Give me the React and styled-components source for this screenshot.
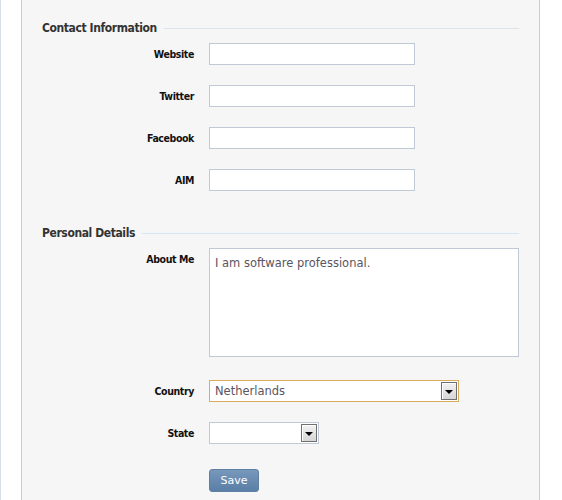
import styled, { createGlobalStyle } from 'styled-components';

const GlobalStyle = createGlobalStyle`
	html, body {
		margin: 0;
		padding: 0;
		background: #fff;
	}
	body {
		font-family: "DejaVu Sans", "Liberation Sans", sans-serif;
	}
`;

const Page = styled.div`
	display: flex;
	height: 500px;
	border-left: 1px solid #d5dee8;
	padding-left: 20px;
	overflow: hidden;
`;

const Panel = styled.div`
	width: 519px;
	box-sizing: border-box;
	background: #f6f6f6;
	border-left: 1px solid #cccccc;
	border-right: 1px solid #cccccc;
	padding: 19px 20px 0 20px;
`;

const Section = styled.section`
	margin-bottom: ${(p) => p.$gap || 0}px;
`;

const Legend = styled.div`
	display: flex;
	align-items: center;
	height: 18px;
	font-family: "DejaVu Sans Condensed", "DejaVu Sans", sans-serif;
	font-size: 12px;
	font-weight: bold;
	letter-spacing: -0.4px;
	color: #333;
	margin-bottom: ${(p) => p.$mb || 6}px;

	&::after {
		content: '';
		flex: 1;
		height: 1px;
		margin-left: 7px;
		background: ${(p) => p.$line || '#dce3ea'};
	}
`;

const Row = styled.div`
	display: grid;
	grid-template-columns: 152px 1fr;
	column-gap: 15px;
	align-items: ${(p) => (p.$top ? 'start' : 'center')};
	margin-top: ${(p) => p.$mt || 0}px;
`;

const Label = styled.label`
	text-align: right;
	font-family: "DejaVu Sans Condensed", "DejaVu Sans", sans-serif;
	font-size: 10.5px;
	font-weight: bold;
	letter-spacing: -0.4px;
	color: #111;
	padding-top: ${(p) => (p.$top ? 5 : 0)}px;
`;

const TextInput = styled.input`
	width: 206px;
	height: 22px;
	box-sizing: border-box;
	border: 1px solid #bfcad6;
	background: #fff;
	outline: none;
	padding: 2px 5px;
`;

const TextArea = styled.textarea`
	width: 310px;
	height: 109px;
	box-sizing: border-box;
	border: 1px solid #bfcad6;
	background: #fff;
	resize: none;
	outline: none;
	padding: 7px 5px;
	font-family: "DejaVu Sans", sans-serif;
	font-size: 11.5px;
	color: #5a5560;
	display: block;
`;

const SelectBox = styled.div`
	display: flex;
	align-items: center;
	width: ${(p) => p.$w}px;
	height: 22px;
	box-sizing: border-box;
	border: 1px solid ${(p) => (p.$focus ? '#d8ac5c' : '#bfcad6')};
	background: #fff;
	padding: 1px;
`;

const SelectValue = styled.span`
	flex: 1;
	padding-left: 4px;
	font-family: "DejaVu Sans", sans-serif;
	font-size: 11.5px;
	color: #5a5560;
`;

const ArrowButton = styled.span`
	width: 16px;
	height: 18px;
	box-sizing: border-box;
	border: 1px solid #707070;
	background: linear-gradient(#f2f2f2, #d6d6d6);
	box-shadow: inset 1px 1px 0 #fff;
	display: flex;
	align-items: center;
	justify-content: center;

	&::before {
		content: '';
		border-left: 4px solid transparent;
		border-right: 4px solid transparent;
		border-top: 4px solid #000;
		margin-top: 1px;
	}
`;

const SaveButton = styled.button`
	width: 50px;
	height: 23px;
	border: 1px solid #5f7fa3;
	border-radius: 3px;
	background: linear-gradient(#7898bc, #5a7ea6);
	color: #fff;
	font-family: "DejaVu Sans", sans-serif;
	font-size: 11px;
	padding: 0;
`;

const contactFields = ['Website', 'Twitter', 'Facebook', 'AIM'];

export default function App() {
	return (
		<>
			<GlobalStyle />
			<Page>
				<Panel>
					<Section $gap={33}>
						<Legend>Contact Information</Legend>
						{contactFields.map((name, i) => (
							<Row key={name} $mt={i === 0 ? 0 : 20}>
								<Label>{name}</Label>
								<TextInput />
							</Row>
						))}
					</Section>
					<Section>
						<Legend $line="#d6e6f3" $mb={6}>Personal Details</Legend>
						<Row $top>
							<Label $top>About Me</Label>
							<TextArea defaultValue="I am software professional." />
						</Row>
						<Row $mt={23}>
							<Label>Country</Label>
							<SelectBox $w={250} $focus>
								<SelectValue>Netherlands</SelectValue>
								<ArrowButton />
							</SelectBox>
						</Row>
						<Row $mt={20}>
							<Label>State</Label>
							<SelectBox $w={110}>
								<SelectValue />
								<ArrowButton />
							</SelectBox>
						</Row>
						<Row $mt={25}>
							<span />
							<div>
								<SaveButton>Save</SaveButton>
							</div>
						</Row>
					</Section>
				</Panel>
			</Page>
		</>
	);
}
